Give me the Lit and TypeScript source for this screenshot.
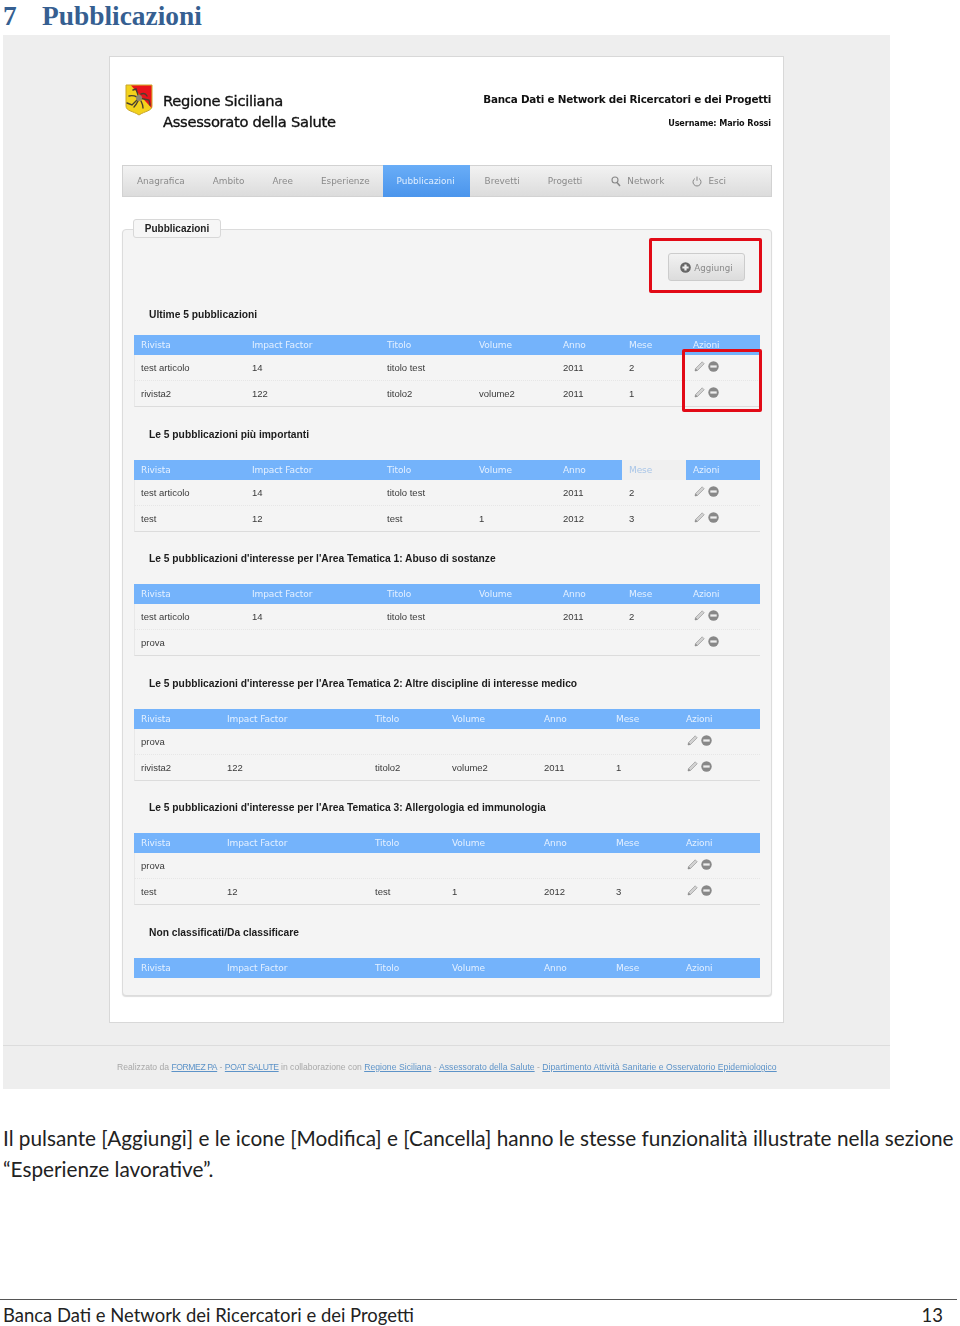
import { LitElement, html, css, svg } from "lit";
import { customElement } from "lit/decorators.js";

type Row = string[];
interface Section { title: string; cols: string; rows: Row[]; first?: boolean; hiMese?: boolean; }
const HEAD = ["Rivista", "Impact Factor", "Titolo", "Volume", "Anno", "Mese", "Azioni"];
const WIDE = "111px 135px 92px 84px 66px 64px 1fr";
const NARROW = "86px 148px 77px 92px 72px 70px 1fr";
const SECTIONS: Section[] = [
  { title: "Ultime 5 pubblicazioni", cols: WIDE, first: true, rows: [
    ["test articolo", "14", "titolo test", "", "2011", "2"],
    ["rivista2", "122", "titolo2", "volume2", "2011", "1"] ] },
  { title: "Le 5 pubblicazioni più importanti", cols: WIDE, hiMese: true, rows: [
    ["test articolo", "14", "titolo test", "", "2011", "2"],
    ["test", "12", "test", "1", "2012", "3"] ] },
  { title: "Le 5 pubblicazioni d'interesse per l'Area Tematica 1: Abuso di sostanze", cols: WIDE, rows: [
    ["test articolo", "14", "titolo test", "", "2011", "2"],
    ["prova", "", "", "", "", ""] ] },
  { title: "Le 5 pubblicazioni d'interesse per l'Area Tematica 2: Altre discipline di interesse medico", cols: NARROW, rows: [
    ["prova", "", "", "", "", ""],
    ["rivista2", "122", "titolo2", "volume2", "2011", "1"] ] },
  { title: "Le 5 pubblicazioni d'interesse per l'Area Tematica 3: Allergologia ed immunologia", cols: NARROW, rows: [
    ["prova", "", "", "", "", ""],
    ["test", "12", "test", "1", "2012", "3"] ] },
  { title: "Non classificati/Da classificare", cols: NARROW, rows: [] },
];
const NAV = ["Anagrafica", "Ambito", "Aree", "Esperienze", "Pubblicazioni", "Brevetti", "Progetti"];

const pencil = svg`<svg class="ic" width="11" height="11" viewBox="0 0 11 11"><path d="M1 10l.6-2.6L8.2.8l2 2-6.6 6.6z" fill="#d2d2d2" stroke="#9a9a9a" stroke-width=".7" stroke-linejoin="round"/><path d="M1 10l.6-2.6 2 2z" fill="#888"/></svg>`;
const minus = svg`<svg class="ic" width="11" height="11" viewBox="0 0 11 11"><circle cx="5.5" cy="5.5" r="5.2" fill="#888"/><rect x="2.3" y="4.4" width="6.4" height="2.2" fill="#eee"/></svg>`;
const plus = svg`<svg class="ic" width="11" height="11" viewBox="0 0 11 11"><circle cx="5.5" cy="5.5" r="5.3" fill="#666"/><path d="M4.4 2.4h2.2v2h2v2.2h-2v2H4.4v-2h-2V4.4h2z" fill="#eee"/></svg>`;
const search = svg`<svg class="ic" width="10" height="11" viewBox="0 0 10 11"><circle cx="4" cy="4" r="3" fill="none" stroke="#888" stroke-width="1.1"/><path d="M6 6.4l3 3.6" stroke="#888" stroke-width="1.5"/></svg>`;
const power = svg`<svg class="ic" width="10" height="11" viewBox="0 0 10 11"><path d="M2.9 2.6a4 4 0 1 0 4.2 0" fill="none" stroke="#888" stroke-width="1"/><path d="M5 .6v4.2" stroke="#888" stroke-width="1"/></svg>`;
const shield = svg`<svg width="28" height="33" viewBox="0 0 28 33">
  <path d="M1 1h26v21c0 5-7 5-13 9C8 27 1 27 1 22z" fill="#f3d21c" stroke="#c9a62a" stroke-width="1"/>
  <path d="M6 1.5h20.5V24z" fill="#e8141c"/>
  <g stroke="#4a4030" fill="none" stroke-width="1.4" stroke-linecap="round">
    <path d="M14 14L11 5l-3 1"/><path d="M14 14l10 2 1 5"/><path d="M14 14l-7 7-5-2"/>
    <path d="M4 12c4-1 6 0 8 1M16 10c3-1 5 0 6 2M9 23c2-2 3-4 4-6M18 24c0-3-1-5-2-7"/>
  </g>
  <circle cx="14" cy="14" r="3" fill="#8d8672"/>
</svg>`;

@customElement("app-root")
export class AppRoot extends LitElement {
  static styles = css`
    :host { display: block; width: 960px; height: 1326px; background: #fff; overflow: hidden; font-family: "Liberation Sans", sans-serif; }
    .h1 { height: 35px; box-sizing: border-box; padding-left: 3px; display: flex; font: bold 27.4px/33px "Liberation Serif", serif; color: #365f91; }
    .h1 .n { width: 39px; }
    .shot { margin-left: 3px; width: 887px; height: 1054px; background: #eee; box-sizing: border-box; padding-top: 21px; filter: blur(0.3px); }
    .box { margin-left: 106px; width: 675px; height: 967px; box-sizing: border-box; background: #fff; border: 1px solid #d8d8d8; padding: 0 11px 0 12px; }
    .top { height: 108px; display: flex; justify-content: space-between; box-sizing: border-box; }
    .brand { display: flex; padding: 27px 0 0 3px; color: #111; font: 14.7px/21px "DejaVu Sans", sans-serif; letter-spacing: -0.3px; -webkit-text-stroke: .35px #111; }
    .brand svg { display: block; margin-right: 10px; flex: none; }
    .brand .t { padding-top: 6px; }
    .right { text-align: right; color: #111; padding-right: 1px; }
    .right .a { font: bold 10.4px/14px "DejaVu Sans", sans-serif; padding-top: 35px; letter-spacing: -0.24px; }
    .right .b { font: bold 8.1px/12px "DejaVu Sans", sans-serif; padding-top: 11px; letter-spacing: -0.1px; }
    .nav { height: 32px; box-sizing: border-box; display: flex; border: 1px solid #d2d2d2; background: linear-gradient(#f2f2f2, #dcdcdc); color: #8a8a8a; font: 8.9px/30px "DejaVu Sans", sans-serif; }
    .nav > div { padding: 0 14px; display: flex; align-items: center; gap: 6px; white-space: nowrap; }
    .nav .on { background: linear-gradient(#69adf7, #4b95ec); color: #dfeeff; margin: -1px 1px 0 -1px; padding: 0 15px 0 14px; height: 32px; }
    .nav .mid { padding-right: 15px; }
    .field { position: relative; margin-top: 32px; height: 767px; box-sizing: border-box; border: 1px solid #dcdcdc; border-radius: 4px; background: #f4f4f4; box-shadow: 0 1px 1px #ddd; padding: 0 11px; }
    .legend { position: absolute; left: 10px; top: -11px; width: 88px; height: 19px; box-sizing: border-box; background: #f6f6f6; border: 1px solid #d8d8d8; border-radius: 3px; font: bold 10px/17px "Liberation Sans", sans-serif; color: #222; text-align: center; }
    .btnrow { height: 70px; display: flex; justify-content: flex-end; padding: 23px 15px 0 0; box-sizing: border-box; }
    .btn { width: 77px; height: 28px; box-sizing: border-box; border: 1px solid #ccc; border-radius: 3px; background: linear-gradient(#f2f2f2, #dcdcdc); display: flex; align-items: center; justify-content: center; gap: 3px; padding-top: 1px; color: #8a8a8a; font: 8.7px "DejaVu Sans", sans-serif; }
    .sec { height: 124.6px; }
    .ttl { height: 35px; box-sizing: border-box; padding: 0 0 0 15px; font: bold 10.25px/19px "Liberation Sans", sans-serif; color: #1c1c1c; }
    .first .ttl { padding-top: 5px; }
    .tw { border-left: 1px solid #e8e8e8; border-bottom: 1px solid #dcdcdc; }
    .tw.empty { border-bottom: 0; border-left-color: transparent; }
    .row { display: grid; padding-left: 7px; height: 25px; align-items: center; font-size: 9.5px; color: #3a3a3a; border-bottom: 1px dotted #e6e6e6; margin-left: -1px; }
    .row:last-child { border-bottom: 0; }
    .head { height: 20px; background: #74b3fb; color: #e4f0ff; font: 9px/20px "DejaVu Sans", sans-serif; letter-spacing: -0.1px; border: 0; padding-left: 0; align-items: stretch; }
    .head > div { padding-left: 7px; }
    .head .hi { background: #f0f0f0; color: #a9c6e8; }
    .acts { display: flex; gap: 3px; align-items: center; padding: 0 0 2px 1px; }
    .ic { display: block; flex: none; }
    .red { position: absolute; border: 3px solid #e20a16; border-radius: 2px; box-sizing: border-box; }
    .r1 { left: 526px; top: 8px; width: 113px; height: 55px; }
    .r2 { left: 559px; top: 119px; width: 80px; height: 63px; }
    .foot { margin-top: 22px; height: 44px; box-sizing: border-box; border-top: 1px solid #dcdcdc; padding: 14px 0 0 114px; font: 8.6px/14px "Liberation Sans", sans-serif; color: #a8a8a8; white-space: nowrap; }
    .foot span { color: #5d93c8; text-decoration: underline; letter-spacing: 0.045px; }
    .foot .caps { letter-spacing: -0.42px; }
    .para { margin: 34px 0 0 3px; width: 955px; font: 20.75px/31px "Lato", sans-serif; color: #222; height: 176px; }
    .pf { width: 957px; box-sizing: border-box; border-top: 1px solid #555; height: 26px; display: flex; justify-content: space-between; padding: 3px 14px 0 3px; font: 18.45px/24px "Lato", sans-serif; color: #222; }
  `;

  private table(s: Section) {
    return html`<div class="tw ${s.rows.length ? "" : "empty"}">
      <div class="row head" style="grid-template-columns:${s.cols}">
        ${HEAD.map((h, i) => html`<div class=${s.hiMese && i === 5 ? "hi" : ""}>${h}</div>`)}
      </div>
      ${s.rows.map((r) => html`<div class="row" style="grid-template-columns:${s.cols}">
        ${r.map((c) => html`<div>${c}</div>`)}
        <div class="acts">${pencil}${minus}</div>
      </div>`)}
    </div>`;
  }

  render() {
    return html`
      <div class="h1"><div class="n">7</div><div>Pubblicazioni</div></div>
      <div class="shot">
        <div class="box">
          <div class="top">
            <div class="brand">${shield}<div class="t">Regione Siciliana<br />Assessorato della Salute</div></div>
            <div class="right">
              <div class="a">Banca Dati e Network dei Ricercatori e dei Progetti</div>
              <div class="b">Username: Mario Rossi</div>
            </div>
          </div>
          <div class="nav">
            ${NAV.map((n) => html`<div class=${n === "Pubblicazioni" ? "on" : n === "Progetti" ? "mid" : ""}>${n}</div>`)}
            <div>${search}Network</div>
            <div>${power}Esci</div>
          </div>
          <div class="field">
            <div class="legend">Pubblicazioni</div>
            <div class="btnrow"><div class="btn">${plus}Aggiungi</div></div>
            ${SECTIONS.map((s) => html`<div class="sec ${s.first ? "first" : ""}">
              <div class="ttl">${s.title}</div>${this.table(s)}
            </div>`)}
            <div class="red r1"></div>
            <div class="red r2"></div>
          </div>
        </div>
        <div class="foot">Realizzato da <span class="caps">FORMEZ PA</span> - <span class="caps">POAT SALUTE</span> in collaborazione con <span>Regione Siciliana</span> - <span>Assessorato della Salute</span> - <span>Dipartimento Attività Sanitarie e Osservatorio Epidemiologico</span></div>
      </div>
      <div class="para">Il pulsante [Aggiungi] e le icone [Modifica] e [Cancella] hanno le stesse funzionalità illustrate nella sezione<br />“Esperienze lavorative”.</div>
      <div class="pf"><div>Banca Dati e Network dei Ricercatori e dei Progetti</div><div>13</div></div>
    `;
  }
}
